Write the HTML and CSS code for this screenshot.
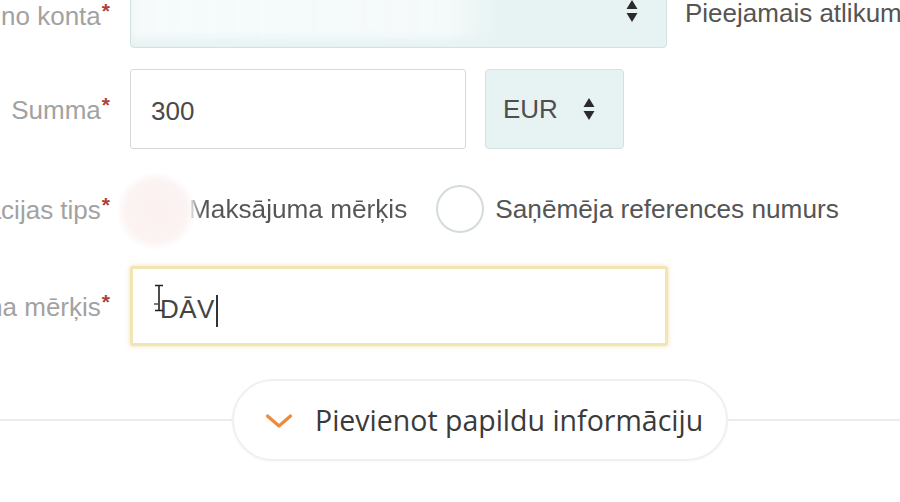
FILE: index.html
```html
<!DOCTYPE html>
<html lang="lv">
<head>
<meta charset="utf-8">
<title>Maksājums</title>
<link rel="stylesheet" href="styles.css">
</head>
<body>
<div class="form">
  <div class="row row-account">
    <div class="label"><span>Maksājums no konta</span><span class="req">*</span></div>
    <div class="select select-account">
      <span class="blur"></span>
      <svg class="updown" viewBox="0 0 12 24" width="12" height="24"><path d="M6 1 L11.5 10 H0.5 Z M6 23 L11.5 14 H0.5 Z" fill="#2b2b2b"/></svg>
    </div>
    <div class="balance">Pieejamais atlikums</div>
  </div>

  <div class="row row-sum">
    <div class="label"><span>Summa</span><span class="req">*</span></div>
    <div class="input input-sum">300</div>
    <div class="select select-cur">
      <span class="cur">EUR</span>
      <svg class="updown" viewBox="0 0 12 24" width="12" height="24"><path d="M6 1 L11.5 10 H0.5 Z M6 23 L11.5 14 H0.5 Z" fill="#2b2b2b"/></svg>
    </div>
  </div>

  <div class="row row-type">
    <div class="label"><span>Informācijas tips</span><span class="req">*</span></div>
    <div class="radios">
      <div class="radio-item">
        <span class="radio radio-active"></span>
        <span class="radio-text faded-start">Maksājuma mērķis</span>
      </div>
      <div class="radio-item">
        <span class="radio"></span>
        <span class="radio-text">Saņēmēja references numurs</span>
      </div>
    </div>
  </div>

  <div class="row row-purpose">
    <div class="label"><span>Maksājuma mērķis</span><span class="req">*</span></div>
    <div class="input input-purpose">
      <span class="typed">DĀV</span><span class="caret"></span>
      <svg class="ibeam" viewBox="0 0 12 28" width="12" height="28"><path d="M2 1.5 H10 M6 1.5 V26.5 M2 26.5 H10" stroke="#222" stroke-width="1.6" fill="none"/><path d="M1 20 H6" stroke="#444" stroke-width="1.4"/></svg>
    </div>
  </div>

  <div class="more-row">
    <span class="line line-left"></span>
    <button class="more-btn" type="button">
      <svg class="chev" viewBox="0 0 28 16" width="28" height="16"><path d="M2.5 3 L14 13 L25.5 3" stroke="#ee8a3c" stroke-width="3.2" fill="none" stroke-linecap="round" stroke-linejoin="round"/></svg>
      <span>Pievienot papildu informāciju</span>
    </button>
    <span class="line"></span>
  </div>
</div>
</body>
</html>
```

FILE: styles.css
```css
html, body {
  margin: 0;
  padding: 0;
  background: #ffffff;
  overflow: hidden;
}

body {
  width: 900px;
  height: 502px;
  font-family: "Liberation Sans", Arial, sans-serif;
  font-size: 26px;
  color: #555555;
}

.form {
  margin-top: -32px;
  display: flex;
  flex-direction: column;
}

.row {
  display: flex;
  align-items: center;
}

.label {
  flex: none;
  width: 110px;
  display: flex;
  justify-content: flex-end;
  align-items: flex-start;
  white-space: nowrap;
  color: #a2a2a2;
  font-size: 26px;
  margin-right: 20px;
  margin-top: 2px;
}

.req {
  color: #a8413f;
  font-size: 21px;
  font-weight: bold;
  margin-top: -2px;
  margin-left: 1px;
}

.row-account .label {
  margin-top: 16px;
}

.select,
.input {
  box-sizing: border-box;
  height: 80px;
  flex: none;
  display: flex;
  align-items: center;
  position: relative;
}

.select {
  background: #e7f3f3;
  border: 1px solid #d2e1e1;
  border-radius: 4px;
}

.select-account {
  width: 537px;
  overflow: hidden;
}

.select-account .blur {
  position: absolute;
  left: 0;
  top: 0;
  width: 370px;
  height: 70px;
  background: linear-gradient(to right, rgba(248,251,251,0.85), rgba(246,250,250,0.9) 85%, rgba(246,250,250,0));
  filter: blur(4px);
}

.updown {
  display: block;
}

.select-account .updown {
  margin-left: auto;
  margin-right: 28px;
  margin-top: 6px;
}

.balance {
  margin-left: 18px;
  margin-top: 10px;
  color: #555555;
  white-space: nowrap;
}

.row-sum {
  margin-top: 21px;
}

.input {
  background: #ffffff;
  border: 1px solid #d8d8d8;
  border-radius: 3px;
}

.input-sum {
  width: 336px;
  padding-left: 20px;
  padding-top: 4px;
  color: #4a4a4a;
}

.select-cur {
  width: 139px;
  margin-left: 19px;
}

.cur {
  margin-left: 17px;
  color: #4e4e4e;
}

.select-cur .updown {
  margin-left: 25px;
}

.row-type {
  margin-top: 21px;
  height: 80px;
}

.row-type .label {
  margin-top: 0;
}

.radios {
  display: flex;
  align-items: center;
  gap: 29px;
  color: #555555;
  font-size: 26.2px;
  margin-top: -2px;
}

.radio-item {
  display: flex;
  align-items: center;
  gap: 11px;
}

.radio {
  box-sizing: border-box;
  width: 48px;
  height: 48px;
  border-radius: 50%;
  border: 2px solid #d4dbdb;
  background: #ffffff;
  position: relative;
  flex: none;
}

.radio-active {
  border-color: transparent;
  background: transparent;
}

.radio-active::before {
  content: "";
  position: absolute;
  left: -15px;
  top: -15px;
  width: 78px;
  height: 78px;
  border-radius: 50%;
  background: radial-gradient(circle, #fbf1f1 0%, #fcf3f3 55%, rgba(253,246,246,0) 72%);
}

.radio-text {
  white-space: nowrap;
}

.faded-start {
  background: linear-gradient(to right, #e6e0e0 0, #555 14px);
  -webkit-background-clip: text;
  background-clip: text;
  color: transparent;
}

.row-purpose {
  margin-top: 16px;
}

.input-purpose {
  width: 538px;
  border: 3px solid #f3e4b6;
  box-shadow: 0 0 5px rgba(236, 212, 140, 0.7);
  padding-left: 27px;
  padding-top: 6px;
  color: #444444;
}

.typed {
  letter-spacing: 0.5px;
}

.caret {
  display: inline-block;
  width: 2px;
  height: 32px;
  background: #333;
  margin-left: 1px;
  margin-top: 4px;
}

.ibeam {
  position: absolute;
  left: 20px;
  top: 15px;
}

.more-row {
  margin-top: 33px;
  display: flex;
  align-items: center;
}

.line {
  flex: 1;
  height: 2px;
  background: #ececec;
}

.line-left {
  flex: none;
  width: 232px;
}

.more-btn {
  flex: none;
  width: 496px;
  height: 82px;
  box-sizing: border-box;
  border: 2px solid #f0f0f0;
  border-radius: 41px;
  background: #ffffff;
  display: flex;
  align-items: center;
  padding: 0 0 0 31px;
  gap: 22px;
  font-family: "Open Sans", "Noto Sans", sans-serif;
  font-size: 28.5px;
  color: #3a3a3a;
  box-shadow: 0 1px 3px rgba(0,0,0,0.03);
}

.chev {
  margin-top: 2px;
}
```
